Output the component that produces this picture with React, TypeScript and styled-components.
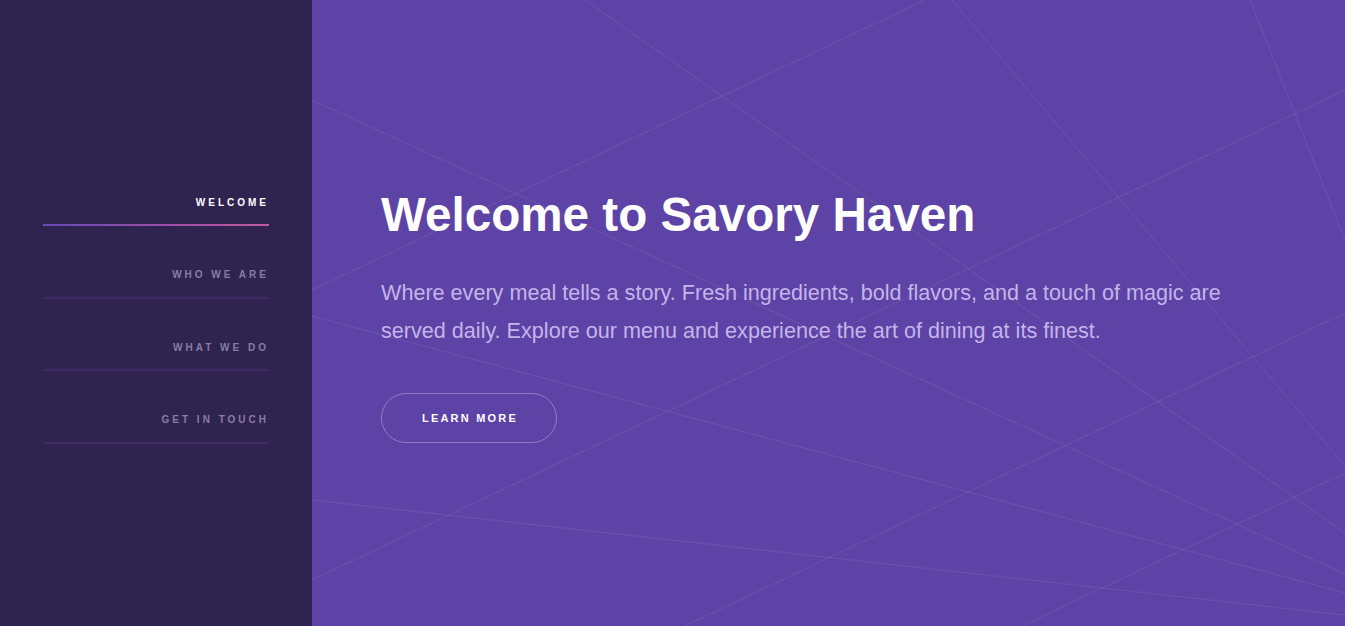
import styled, { createGlobalStyle } from 'styled-components';

const GlobalStyle = createGlobalStyle`
  html, body {
    margin: 0;
    padding: 0;
    height: 100%;
  }
  body {
    font-family: "Liberation Sans", Arial, sans-serif;
    background: #5d43a5;
  }
  #root {
    height: 100%;
  }
`;

const navItems = ['Welcome', 'Who We Are', 'What We Do', 'Get In Touch'];

// decorative background lines, coords local to the main panel
const bgLines: [number, number, number, number][] = [
  [273, 0, 1033, 533],
  [0, 100, 1033, 574],
  [0, 290, 613, 0],
  [640, 0, 1033, 466],
  [938, 0, 1033, 240],
  [1033, 90, 0, 580],
  [0, 316, 1033, 593],
  [0, 500, 1033, 615],
  [373, 626, 1033, 313],
  [1033, 473, 710, 626],
];

const Page = styled.div`
  display: flex;
  height: 100vh;
  min-height: 626px;
`;

const Sidebar = styled.aside`
  width: 312px;
  flex-shrink: 0;
  background: #2f2450;
  display: flex;
  flex-direction: column;
  justify-content: center;
  padding: 13px 43px 0;
  box-sizing: border-box;
`;

const Nav = styled.nav`
  display: flex;
  flex-direction: column;
  gap: 42px;
`;

const NavLink = styled.a<{ $active?: boolean }>`
  display: block;
  position: relative;
  text-align: right;
  font-size: 10px;
  line-height: 14px;
  font-weight: 700;
  letter-spacing: 3px;
  text-transform: uppercase;
  text-decoration: none;
  cursor: pointer;
  padding-bottom: 16.5px;
  color: ${(p) => (p.$active ? '#ffffff' : '#877ca3')};

  &::after {
    content: '';
    position: absolute;
    left: 0;
    right: 0;
    bottom: 0;
    height: 2px;
    background: ${(p) =>
      p.$active ? 'linear-gradient(90deg, #6749b4 0%, #a14fa8 60%, #c45a9c 100%)' : '#3a2c62'};
  }
`;

const Main = styled.main`
  flex: 1;
  position: relative;
  overflow: hidden;
  background: #5d43a5;
  display: flex;
  flex-direction: column;
  justify-content: center;
  padding: 3px 69px 0;
`;

const Lines = styled.svg`
  position: absolute;
  inset: 0;
  width: 100%;
  height: 100%;
  pointer-events: none;
`;

const Content = styled.div`
  position: relative;
  display: flex;
  flex-direction: column;
  align-items: flex-start;
`;

const Title = styled.h1`
  margin: 0 0 31px;
  font-size: 47.6px;
  line-height: 1.2;
  font-weight: 700;
  color: #ffffff;
`;

const Lead = styled.p`
  margin: 0 0 44px;
  max-width: 880px;
  font-size: 21.6px;
  line-height: 1.75;
  color: rgba(226, 214, 255, 0.78);
`;

const OutlineButton = styled.button`
  height: 50px;
  box-sizing: border-box;
  padding: 0 38px 0 40px;
  border: 1px solid rgba(255, 255, 255, 0.3);
  border-radius: 25px;
  background: transparent;
  color: #ffffff;
  font-family: inherit;
  font-size: 11px;
  font-weight: 700;
  letter-spacing: 2.2px;
  text-transform: uppercase;
  cursor: pointer;
`;

export default function App() {
  return (
    <>
      <GlobalStyle />
      <Page>
        <Sidebar>
          <Nav>
            {navItems.map((item, i) => (
              <NavLink key={item} $active={i === 0}>
                {item}
              </NavLink>
            ))}
          </Nav>
        </Sidebar>
        <Main>
          <Lines viewBox="0 0 1033 626" preserveAspectRatio="none">
            {bgLines.map(([x1, y1, x2, y2], i) => (
              <line
                key={i}
                x1={x1}
                y1={y1}
                x2={x2}
                y2={y2}
                stroke="rgba(255,255,255,0.09)"
                strokeWidth={1}
              />
            ))}
          </Lines>
          <Content>
            <Title>Welcome to Savory Haven</Title>
            <Lead>
              Where every meal tells a story. Fresh ingredients, bold flavors, and a touch of magic are
              served daily. Explore our menu and experience the art of dining at its finest.
            </Lead>
            <OutlineButton>Learn More</OutlineButton>
          </Content>
        </Main>
      </Page>
    </>
  );
}
